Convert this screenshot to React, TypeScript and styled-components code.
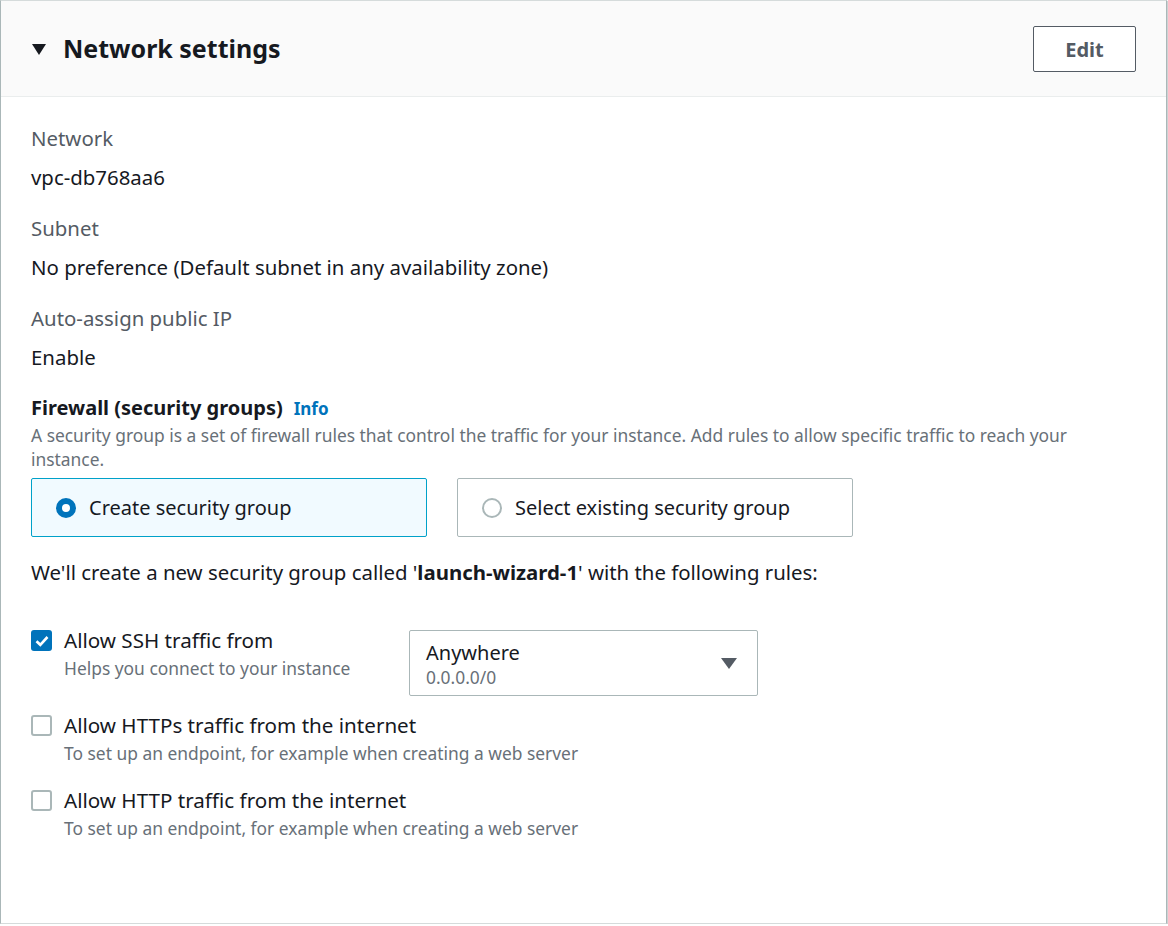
import React from "react";
import styled, { createGlobalStyle } from "styled-components";

const Global = createGlobalStyle`
  html, body { margin: 0; padding: 0; background: #ffffff; }
  body { font-family: "Noto Sans", "Open Sans", Arial, sans-serif; color: #16191f; }
  * { box-sizing: border-box; }
`;

const Panel = styled.section`
  width: 1167px;
  height: 924px;
  background: #fff;
  border: 1px solid #d5dbdb;
  border-left-color: #aab7b8;
  border-right-color: #aab7b8;
  box-shadow: 0 1px 1px 0 rgba(0, 28, 36, 0.3), 1px 1px 1px 0 rgba(0, 28, 36, 0.15);
  display: flex;
  flex-direction: column;
`;

const Header = styled.header`
  height: 96px;
  background: #fafafa;
  border-bottom: 1px solid #eaeded;
  display: flex;
  align-items: center;
  padding: 0 30px 0 30px;
`;

const Caret = styled.span`
  width: 0;
  height: 0;
  border-left: 7px solid transparent;
  border-right: 7px solid transparent;
  border-top: 11px solid #16191f;
  margin-right: 17px;
  margin-left: 1px;
  margin-top: 1px;
`;

const Title = styled.h2`
  margin: 0 0 2px 0;
  font-size: 25px;
  font-weight: 700;
  color: #16191f;
  flex: 1;
`;

const EditButton = styled.button`
  width: 103px;
  height: 46px;
  border: 1px solid #545b64;
  border-radius: 2px;
  background: #fff;
  font-family: inherit;
  font-weight: 700;
  font-size: 20px;
  color: #545b64;
  padding: 0;
  margin-top: 1px;
`;

const Body = styled.div`
  padding: 27px 30px 0 30px;
  display: flex;
  flex-direction: column;
`;

const Field = styled.div`
  display: flex;
  flex-direction: column;
  margin-bottom: 23px;
`;

const Label = styled.div`
  font-size: 20.4px;
  line-height: 28px;
  color: #545b64;
  margin-bottom: 11px;
`;

const Value = styled.div`
  font-size: 20.4px;
  line-height: 28px;
  color: #16191f;
`;

const FwLabel = styled.div`
  font-size: 20px;
  line-height: 28px;
  font-weight: 700;
  color: #16191f;
  display: flex;
  align-items: baseline;
`;

const Info = styled.a`
  font-size: 17px;
  font-weight: 700;
  color: #0073bb;
  margin-left: 11px;
  text-decoration: none;
`;

const Desc = styled.div`
  font-size: 17.4px;
  line-height: 24px;
  color: #687078;
  padding-right: 60px;
`;

const Cards = styled.div`
  display: flex;
  gap: 30px;
  margin-top: 7px;
`;

const Card = styled.div<{ $selected?: boolean }>`
  width: 396px;
  height: 59px;
  border: 1px solid ${(p) => (p.$selected ? "#00a1c9" : "#aab7b8")};
  background: ${(p) => (p.$selected ? "#f1faff" : "#fff")};
  border-radius: 2px;
  display: flex;
  align-items: center;
  padding-left: 24px;
  font-size: 20px;
  color: #16191f;
`;

const Radio = styled.span<{ $checked?: boolean }>`
  width: 20px;
  height: 20px;
  border-radius: 50%;
  border: ${(p) => (p.$checked ? "6px solid #0073bb" : "2px solid #aab7b8")};
  background: #fff;
  margin-right: 13px;
  flex-shrink: 0;
`;

const Note = styled.div`
  font-size: 20.4px;
  line-height: 28px;
  margin-top: 21px;
  margin-bottom: 40px;
  b { font-weight: 700; }
`;

const RuleRow = styled.div`
  display: flex;
  align-items: flex-start;
  margin-bottom: 15px;
`;

const RuleMain = styled.div`
  display: flex;
  align-items: flex-start;
  width: 378px;
  min-height: 60px;
`;

const Check = styled.span<{ $checked?: boolean }>`
  width: 21px;
  height: 21px;
  border-radius: 3px;
  flex-shrink: 0;
  margin-top: 4px;
  margin-right: 12px;
  border: ${(p) => (p.$checked ? "none" : "2px solid #aab7b8")};
  background: ${(p) => (p.$checked ? "#0073bb" : "#fff")};
  display: flex;
  align-items: center;
  justify-content: center;
`;

const RuleText = styled.div`
  display: flex;
  flex-direction: column;
  white-space: nowrap;
`;

const RuleTitle = styled.div`
  font-size: 20.6px;
  line-height: 28px;
  color: #16191f;
`;

const RuleDesc = styled.div`
  font-size: 17.4px;
  line-height: 24px;
  color: #687078;
  margin-top: 2px;
`;

const Select = styled.div`
  width: 349px;
  height: 66px;
  margin-top: 4px;
  border: 1px solid #aab7b8;
  border-radius: 2px;
  display: flex;
  align-items: center;
  padding: 3px 20px 0 16px;
`;

const SelectText = styled.div`
  flex: 1;
  display: flex;
  flex-direction: column;
`;

const SelectMain = styled.div`
  font-size: 20px;
  line-height: 25px;
  color: #16191f;
`;

const SelectSub = styled.div`
  font-size: 17.4px;
  line-height: 24px;
  color: #687078;
`;

const SelectCaret = styled.span`
  width: 0;
  height: 0;
  border-left: 8px solid transparent;
  border-right: 8px solid transparent;
  border-top: 11px solid #545b64;
  margin-top: -3px;
`;

const rules = [
  { title: "Allow SSH traffic from", desc: "Helps you connect to your instance", checked: true, select: true },
  { title: "Allow HTTPs traffic from the internet", desc: "To set up an endpoint, for example when creating a web server", checked: false, select: false },
  { title: "Allow HTTP traffic from the internet", desc: "To set up an endpoint, for example when creating a web server", checked: false, select: false },
];

export default function App() {
  return (
    <>
      <Global />
      <Panel>
        <Header>
          <Caret />
          <Title>Network settings</Title>
          <EditButton>Edit</EditButton>
        </Header>
        <Body>
          <Field>
            <Label>Network</Label>
            <Value>vpc-db768aa6</Value>
          </Field>
          <Field>
            <Label>Subnet</Label>
            <Value>No preference (Default subnet in any availability zone)</Value>
          </Field>
          <Field>
            <Label>Auto-assign public IP</Label>
            <Value>Enable</Value>
          </Field>
          <FwLabel>
            Firewall (security groups)<Info href="#">Info</Info>
          </FwLabel>
          <Desc>
            A security group is a set of firewall rules that control the traffic for your instance. Add rules to allow
            specific traffic to reach your instance.
          </Desc>
          <Cards>
            <Card $selected>
              <Radio $checked />
              Create security group
            </Card>
            <Card>
              <Radio />
              Select existing security group
            </Card>
          </Cards>
          <Note>
            We'll create a new security group called '<b>launch-wizard-1</b>' with the following rules:
          </Note>
          {rules.map((r) => (
            <RuleRow key={r.title}>
              <RuleMain>
                <Check $checked={r.checked}>
                  {r.checked && (
                    <svg width="14" height="12" viewBox="0 0 14 12">
                      <path d="M1.5 6.2 L5.3 9.8 L12.5 2" fill="none" stroke="#fff" strokeWidth="2.6" />
                    </svg>
                  )}
                </Check>
                <RuleText>
                  <RuleTitle>{r.title}</RuleTitle>
                  <RuleDesc>{r.desc}</RuleDesc>
                </RuleText>
              </RuleMain>
              {r.select && (
                <Select>
                  <SelectText>
                    <SelectMain>Anywhere</SelectMain>
                    <SelectSub>0.0.0.0/0</SelectSub>
                  </SelectText>
                  <SelectCaret />
                </Select>
              )}
            </RuleRow>
          ))}
        </Body>
      </Panel>
    </>
  );
}
